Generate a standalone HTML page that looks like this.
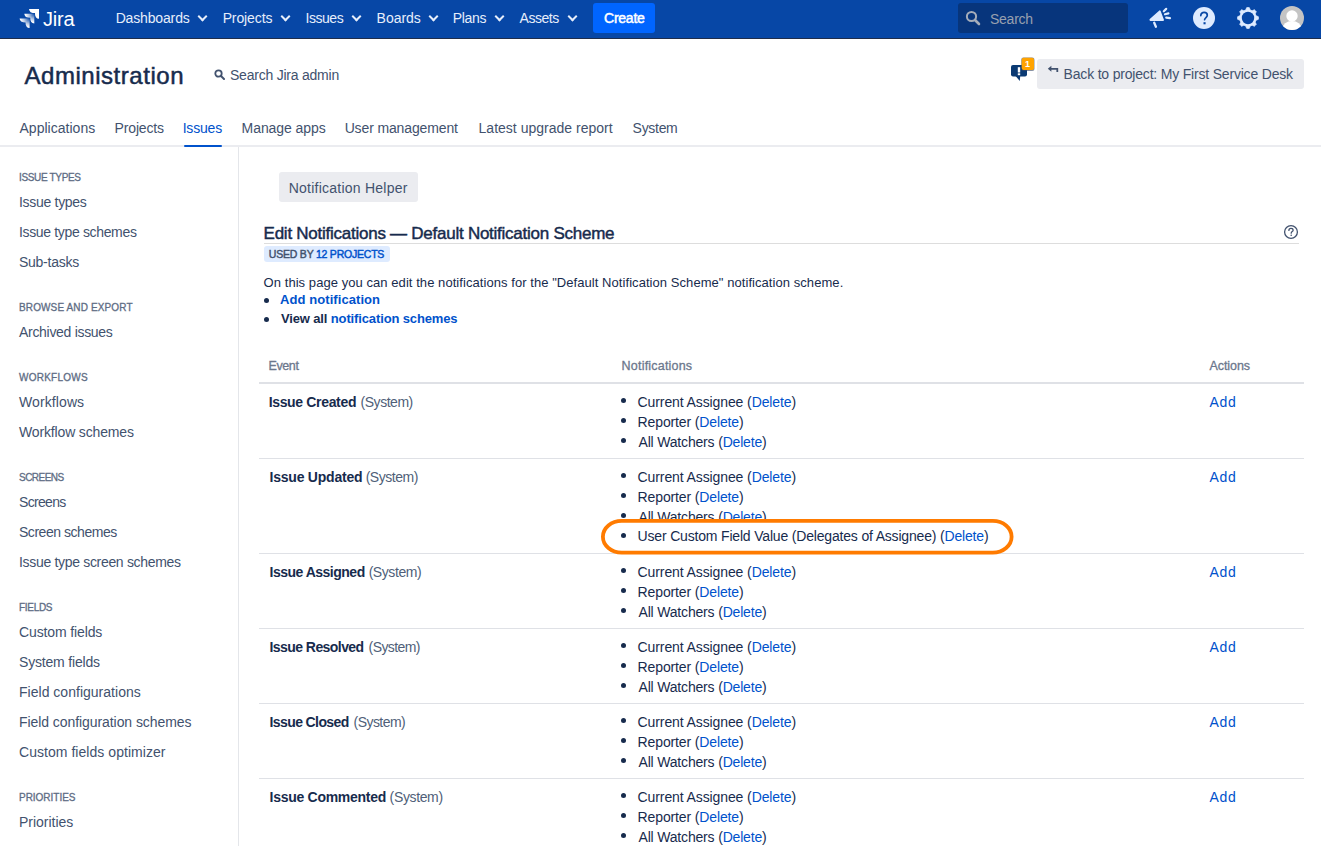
<!DOCTYPE html><html><head><meta charset="utf-8"><style>
*{box-sizing:border-box;margin:0;padding:0}
html,body{width:1321px;height:846px;overflow:hidden;background:#fff;font-family:"Liberation Sans",sans-serif;color:#172B4D;font-size:14px}
.t{position:absolute;white-space:nowrap;line-height:20px}
.r14{font-size:14px;letter-spacing:-0.2px}
.b14{font-size:14px;font-weight:bold;letter-spacing:-0.4px}
#hdr{position:absolute;left:0;top:0;width:1321px;height:39px;background:#0747A6;border-bottom:1px solid #1f2d4a}
.nav{color:#E6EEFB;font-size:14px;letter-spacing:-0.3px;top:8px}
.chev{position:absolute;top:13px;width:7px;height:7px;border-right:2.2px solid #E6EEFB;border-bottom:2.2px solid #E6EEFB;transform:rotate(45deg)}
.sh{font-size:10px;color:#5E6C84;left:19px;letter-spacing:-0.3px;-webkit-text-stroke:0.3px #5E6C84}
.si{font-size:14px;color:#42526E;left:19px;letter-spacing:-0.25px}
.tab{font-size:14px;color:#42526E;top:118px;letter-spacing:-0.1px}
.lk{color:#0052CC}
.sys{color:#505F79}
.rb{position:absolute;left:259px;width:1045px;height:1px;background:#DFE1E6}
.bul{position:absolute;width:5px;height:5px;border-radius:50%;background:#172B4D}
</style></head><body>
<div id="hdr">
<svg style="position:absolute;left:19px;top:8px" width="22" height="22" viewBox="0 0 22 22">
<defs>
<radialGradient id="g1" cx="0.95" cy="0.05" r="1.0"><stop offset="0" stop-color="#fff" stop-opacity="0.1"/><stop offset="0.5" stop-color="#fff" stop-opacity="0.7"/><stop offset="0.85" stop-color="#fff" stop-opacity="1"/></radialGradient>
</defs>
<polygon points="10.00,1.10 20.00,1.10 20.00,10.80 18.20,10.40 16.90,9.20 16.10,7.20 16.00,5.10 13.60,4.90 11.60,4.20 10.40,2.60" fill="#fff"/>
<polygon points="5.30,5.80 15.30,5.80 15.30,15.50 13.50,15.10 12.20,13.90 11.40,11.90 11.30,9.80 8.90,9.60 6.90,8.90 5.70,7.30" fill="url(#g1)"/>
<polygon points="0.60,10.40 10.60,10.40 10.60,20.10 8.80,19.70 7.50,18.50 6.70,16.50 6.60,14.40 4.20,14.20 2.20,13.50 1.00,11.90" fill="url(#g1)"/>
</svg>
<div class="t" style="left:43px;top:7px;font-size:20px;line-height:24px;color:#fff;letter-spacing:-0.2px">Jira</div>
<div id="nav_Dashboards" class="t" style="left:115.63px;top:8px;color:#E6EEFB;font-size:14px;letter-spacing:-0.150px">Dashboards</div>
<div class="chev" style="left:199px"></div>
<div id="nav_Projects" class="t" style="left:222.65px;top:8px;color:#E6EEFB;font-size:14px;letter-spacing:-0.107px">Projects</div>
<div class="chev" style="left:282px"></div>
<div id="nav_Issues" class="t" style="left:305.60px;top:8px;color:#E6EEFB;font-size:14px;letter-spacing:-0.480px">Issues</div>
<div class="chev" style="left:353px"></div>
<div id="nav_Boards" class="t" style="left:376.60px;top:8px;color:#E6EEFB;font-size:14px;letter-spacing:-0.030px">Boards</div>
<div class="chev" style="left:430px"></div>
<div id="nav_Plans" class="t" style="left:452.65px;top:8px;color:#E6EEFB;font-size:14px;letter-spacing:-0.300px">Plans</div>
<div class="chev" style="left:496px"></div>
<div id="nav_Assets" class="t" style="left:519.55px;top:8px;color:#E6EEFB;font-size:14px;letter-spacing:-0.480px">Assets</div>
<div class="chev" style="left:569px"></div>
<div class="t" style="left:593px;top:3px;width:62px;height:30px;background:#0065FF;border-radius:3px"></div>
<div id="create" class="t" style="left:604.00px;top:8px;color:#fff;font-size:14px;-webkit-text-stroke:0.5px #fff;letter-spacing:-0.232px">Create</div>
<div class="t" style="left:958px;top:3px;width:170px;height:30px;background:#07357C;border-radius:3px"></div>
<svg style="position:absolute;left:965px;top:10px" width="16" height="16" viewBox="0 0 16 16"><circle cx="6.5" cy="6.5" r="4.6" fill="none" stroke="#A5ADBA" stroke-width="2"/><line x1="10" y1="10" x2="14" y2="14" stroke="#A5ADBA" stroke-width="2.6" stroke-linecap="round"/></svg>
<div class="t" style="left:990px;top:9px;color:#97A0AF;font-size:14px;letter-spacing:-0.25px">Search</div>
<svg style="position:absolute;left:1148px;top:6px" width="26" height="24" viewBox="0 0 26 24">
<path d="M2.3 13.6 L11.9 5.2 L15.2 14.1 L2.3 14.1 Z" fill="#DEEBFF" stroke="#DEEBFF" stroke-width="1.6" stroke-linejoin="round"/>
<line x1="6.2" y1="16.8" x2="7.9" y2="20.8" stroke="#DEEBFF" stroke-width="2.3" stroke-linecap="round"/>
<line x1="15.8" y1="5.3" x2="18.2" y2="2.9" stroke="#DEEBFF" stroke-width="2.2" stroke-linecap="round"/>
<line x1="17" y1="8.2" x2="20.4" y2="7.4" stroke="#DEEBFF" stroke-width="2.2" stroke-linecap="round"/>
<line x1="18.2" y1="11.6" x2="22" y2="12.1" stroke="#DEEBFF" stroke-width="2.2" stroke-linecap="round"/>
</svg>
<svg style="position:absolute;left:1193px;top:7px" width="22" height="22" viewBox="0 0 22 22">
<circle cx="11" cy="11" r="11" fill="#DEEBFF"/>
<path d="M7.8 8.6 C7.8 6.6 9.3 5.4 11.1 5.4 C13 5.4 14.3 6.6 14.3 8.3 C14.3 10.4 11.7 10.6 11.6 12.7" fill="none" stroke="#0747A6" stroke-width="1.7" stroke-linecap="round"/>
<rect x="10.5" y="15.2" width="2.1" height="2.1" fill="#0747A6"/>
</svg>
<svg style="position:absolute;left:1237px;top:7px" width="22" height="22" viewBox="0 0 22 22">
<polygon points="9.64,0.69 11.00,0.60 12.36,0.69 13.15,2.98 14.18,3.33 15.15,3.81 17.33,2.75 18.35,3.65 19.25,4.67 18.19,6.85 18.67,7.82 19.02,8.85 21.31,9.64 21.40,11.00 21.31,12.36 19.02,13.15 18.67,14.18 18.19,15.15 19.25,17.33 18.35,18.35 17.33,19.25 15.15,18.19 14.18,18.67 13.15,19.02 12.36,21.31 11.00,21.40 9.64,21.31 8.85,19.02 7.82,18.67 6.85,18.19 4.67,19.25 3.65,18.35 2.75,17.33 3.81,15.15 3.33,14.18 2.98,13.15 0.69,12.36 0.60,11.00 0.69,9.64 2.98,8.85 3.33,7.82 3.81,6.85 2.75,4.67 3.65,3.65 4.67,2.75 6.85,3.81 7.82,3.33 8.85,2.98" fill="#DEEBFF" stroke="#DEEBFF" stroke-width="0.8" stroke-linejoin="round"/>
<circle cx="11" cy="11" r="6.2" fill="#0747A6"/>
</svg>
<svg style="position:absolute;left:1280px;top:6px" width="24" height="24" viewBox="0 0 24 24">
<defs><clipPath id="cav"><circle cx="12" cy="12" r="12"/></clipPath></defs>
<circle cx="12" cy="12" r="12" fill="#C4C4C4"/>
<g clip-path="url(#cav)"><circle cx="12" cy="10" r="5.7" fill="#fff"/><ellipse cx="12" cy="23" rx="9.6" ry="8" fill="#fff"/></g>
</svg>
</div>
<div id="admin" class="t" style="left:24.49px;top:60px;font-size:24px;line-height:32px;color:#172B4D;-webkit-text-stroke:0.5px #172B4D;letter-spacing:0.538px">Administration</div>
<svg style="position:absolute;left:214px;top:69px" width="11" height="11" viewBox="0 0 11 11"><circle cx="4.5" cy="4.5" r="3.2" fill="none" stroke="#42526E" stroke-width="1.8"/><line x1="7" y1="7" x2="10" y2="10" stroke="#42526E" stroke-width="2" stroke-linecap="round"/></svg>
<div id="sadmin" class="t" style="left:230.00px;top:65px;font-size:14px;color:#42526E;letter-spacing:-0.228px">Search Jira admin</div>
<svg style="position:absolute;left:1009px;top:57px" width="27" height="26" viewBox="0 0 27 26">
<rect x="2" y="8" width="16" height="11.6" rx="2" fill="#0B3A73"/><path d="M6.5 19 L10.8 23.9 L11.2 19 Z" fill="#0B3A73"/>
<rect x="8.8" y="10.2" width="2.4" height="5.3" fill="#fff"/><rect x="8.8" y="16.3" width="2.4" height="1.9" fill="#fff"/>
<rect x="12.2" y="0.6" width="13.3" height="13.3" rx="2.2" fill="#3b4a66" opacity="0.6"/>
<rect x="12.7" y="0.8" width="12.3" height="12.3" rx="2" fill="#FFA300"/>
</svg>
<div class="t" style="left:1021px;top:57px;width:13px;text-align:center;font-size:9px;line-height:14px;font-weight:bold;color:#fff">1</div>
<div class="t" style="left:1037px;top:59px;width:267px;height:30px;background:#EBECF0;border-radius:3px"></div>
<svg style="position:absolute;left:1047px;top:65px" width="12" height="9" viewBox="0 0 12 9"><path d="M3 3.8 H10.3 V6.9" fill="none" stroke="#42526E" stroke-width="1.8"/><path d="M0.8 3.8 L4.4 0.8 V6.8 Z" fill="#42526E"/></svg>
<div id="back" class="t" style="left:1063.59px;top:64px;font-size:14px;color:#42526E;letter-spacing:-0.190px">Back to project: My First Service Desk</div>
<div id="tab_Applications" class="t" style="left:19.50px;top:118px;font-size:14px;color:#42526E;letter-spacing:0.023px">Applications</div>
<div id="tab_Projects" class="t" style="left:114.60px;top:118px;font-size:14px;color:#42526E;letter-spacing:-0.164px">Projects</div>
<div id="tab_Issues" class="t" style="left:182.65px;top:118px;font-size:14px;color:#0052CC;letter-spacing:-0.190px">Issues</div>
<div id="tab_Manage_apps" class="t" style="left:241.59px;top:118px;font-size:14px;color:#42526E;letter-spacing:-0.064px">Manage apps</div>
<div id="tab_User_management" class="t" style="left:344.64px;top:118px;font-size:14px;color:#42526E;letter-spacing:-0.132px">User management</div>
<div id="tab_Latest_upgrade_report" class="t" style="left:478.59px;top:118px;font-size:14px;color:#42526E;letter-spacing:0.008px">Latest upgrade report</div>
<div id="tab_System" class="t" style="left:632.60px;top:118px;font-size:14px;color:#42526E;letter-spacing:-0.298px">System</div>
<div style="position:absolute;left:0;top:145px;width:1321px;height:2px;background:#EBECF0"></div>
<div style="position:absolute;left:184px;top:145px;width:38px;height:2px;border-radius:1px;background:#0052CC"></div>
<div style="position:absolute;left:238px;top:147px;width:1px;height:699px;background:#E4E6EA"></div>
<div class="t sh" style="top:168px;letter-spacing:-0.340px">ISSUE TYPES</div>
<div class="t si" style="top:192px;letter-spacing:-0.300px">Issue types</div>
<div class="t si" style="top:222px;letter-spacing:-0.344px">Issue type schemes</div>
<div class="t si" style="top:252px;letter-spacing:-0.262px">Sub-tasks</div>
<div class="t sh" style="top:298px;letter-spacing:0.125px">BROWSE AND EXPORT</div>
<div class="t si" style="top:322px;letter-spacing:-0.300px">Archived issues</div>
<div class="t sh" style="top:368px;letter-spacing:0.250px">WORKFLOWS</div>
<div class="t si" style="top:392px;letter-spacing:0.100px">Workflows</div>
<div class="t si" style="top:422px;letter-spacing:-0.150px">Workflow schemes</div>
<div class="t sh" style="top:468px;letter-spacing:-0.517px">SCREENS</div>
<div class="t si" style="top:492px;letter-spacing:-0.667px">Screens</div>
<div class="t si" style="top:522px;letter-spacing:-0.465px">Screen schemes</div>
<div class="t si" style="top:552px;letter-spacing:-0.317px">Issue type screen schemes</div>
<div class="t sh" style="top:598px;letter-spacing:-0.300px">FIELDS</div>
<div class="t si" style="top:622px;letter-spacing:-0.125px">Custom fields</div>
<div class="t si" style="top:652px;letter-spacing:-0.183px">System fields</div>
<div class="t si" style="top:682px;letter-spacing:0.018px">Field configurations</div>
<div class="t si" style="top:712px;letter-spacing:-0.069px">Field configuration schemes</div>
<div class="t si" style="top:742px;letter-spacing:0.045px">Custom fields optimizer</div>
<div class="t sh" style="top:788px;letter-spacing:-0.022px">PRIORITIES</div>
<div class="t si" style="top:812px;letter-spacing:-0.017px">Priorities</div>
<div class="t" style="left:279px;top:172px;width:139px;height:30px;background:#EBECF0;border-radius:3px"></div>
<div id="nhelp" class="t" style="left:288.67px;top:178px;color:#42526E;font-size:14px;letter-spacing:0.240px">Notification Helper</div>
<div id="title" class="t" style="left:263.58px;top:223px;font-size:17px;line-height:22px;color:#172B4D;-webkit-text-stroke:0.45px #172B4D;letter-spacing:-0.253px">Edit Notifications — Default Notification Scheme</div>
<div style="position:absolute;left:264px;top:243px;width:1035px;height:1px;background:#DDDDDD"></div>
<svg style="position:absolute;left:1283px;top:224px" width="16" height="16" viewBox="0 0 16 16"><circle cx="8" cy="8" r="6.4" fill="none" stroke="#42526E" stroke-width="1.3"/>
<path d="M5.9 6.4 C5.9 5.1 6.9 4.4 8 4.4 C9.2 4.4 10.1 5.1 10.1 6.2 C10.1 7.6 8.2 7.6 8.2 9.2" fill="none" stroke="#42526E" stroke-width="1.3" stroke-linecap="round"/><circle cx="8.2" cy="11.3" r="0.8" fill="#42526E"/></svg>
<div class="t" style="left:264px;top:246px;width:126px;height:16px;background:#DEEBFF;border-radius:3px"></div>
<div id="badge" class="t" style="left:268.86px;top:247px;font-size:10.5px;line-height:14px;color:#42526E;-webkit-text-stroke:0.45px #42526E;letter-spacing:-0.220px">USED BY <span style="color:#0052CC;-webkit-text-stroke:0.45px #0052CC">12 PROJECTS</span></div>
<div id="para" class="t" style="left:263.58px;top:274px;font-size:13px;line-height:18px;color:#172B4D;letter-spacing:0.060px">On this page you can edit the notifications for the "Default Notification Scheme" notification scheme.</div>
<div class="bul" style="left:264px;top:298px"></div>
<div id="addn" class="t" style="left:280.06px;top:291px;font-size:13px;line-height:18px;font-weight:bold;letter-spacing:0.072px"><span class="lk">Add notification</span></div>
<div class="bul" style="left:264px;top:317px"></div>
<div id="viewall" class="t" style="left:280.96px;top:310px;font-size:13px;line-height:18px;font-weight:bold;letter-spacing:-0.135px">View all <span class="lk">notification schemes</span></div>
<div id="h_event" class="t" style="left:268.55px;top:357px;font-size:12.5px;line-height:18px;color:#6B778C;-webkit-text-stroke:0.3px #6B778C;letter-spacing:-0.410px">Event</div>
<div id="h_notif" class="t" style="left:621.59px;top:357px;font-size:12.5px;line-height:18px;color:#6B778C;-webkit-text-stroke:0.3px #6B778C;letter-spacing:0.205px">Notifications</div>
<div id="h_act" class="t" style="left:1209.53px;top:357px;font-size:12.5px;line-height:18px;color:#6B778C;-webkit-text-stroke:0.3px #6B778C;letter-spacing:-0.080px">Actions</div>
<div class="rb" style="top:382px;height:2px"></div>
<div class="rb" style="top:458px"></div>
<div class="rb" style="top:553px"></div>
<div class="rb" style="top:628px"></div>
<div class="rb" style="top:703px"></div>
<div class="rb" style="top:778px"></div>
<div id="rn0" class="t" style="left:268.63px;top:392px;font-size:14px;font-weight:bold;color:#172B4D;letter-spacing:-0.333px">Issue Created</div>
<div id="rs0" class="t" style="left:360.55px;top:392px;font-size:14px;letter-spacing:-0.470px"><span class="sys">(System)</span></div>
<div id="ra0" class="t" style="left:1209.51px;top:392px;font-size:14px;color:#0052CC;letter-spacing:0.700px">Add</div>
<div class="bul" style="left:621px;top:398px"></div>
<div id="ri0_0" class="t" style="left:637.60px;top:392px;font-size:14px;letter-spacing:-0.106px">Current Assignee (<span class="lk">Delete</span>)</div>
<div class="bul" style="left:621px;top:418px"></div>
<div id="ri0_1" class="t" style="left:637.60px;top:412px;font-size:14px;letter-spacing:-0.133px">Reporter (<span class="lk">Delete</span>)</div>
<div class="bul" style="left:621px;top:438px"></div>
<div id="ri0_2" class="t" style="left:638.50px;top:432px;font-size:14px;letter-spacing:-0.178px">All Watchers (<span class="lk">Delete</span>)</div>
<div id="rn1" class="t" style="left:269.55px;top:467px;font-size:14px;font-weight:bold;color:#172B4D;letter-spacing:-0.228px">Issue Updated</div>
<div id="rs1" class="t" style="left:365.63px;top:467px;font-size:14px;letter-spacing:-0.470px"><span class="sys">(System)</span></div>
<div id="ra1" class="t" style="left:1209.51px;top:467px;font-size:14px;color:#0052CC;letter-spacing:0.700px">Add</div>
<div class="bul" style="left:621px;top:473px"></div>
<div id="ri1_0" class="t" style="left:637.60px;top:467px;font-size:14px;letter-spacing:-0.106px">Current Assignee (<span class="lk">Delete</span>)</div>
<div class="bul" style="left:621px;top:493px"></div>
<div id="ri1_1" class="t" style="left:637.60px;top:487px;font-size:14px;letter-spacing:-0.133px">Reporter (<span class="lk">Delete</span>)</div>
<div class="bul" style="left:621px;top:513px"></div>
<div class="t" style="left:638.50px;top:507px;font-size:14px;letter-spacing:-0.178px">All Watchers (<span class="lk">Delete</span>)</div>
<div id="rn2" class="t" style="left:269.55px;top:562px;font-size:14px;font-weight:bold;color:#172B4D;letter-spacing:-0.504px">Issue Assigned</div>
<div id="rs2" class="t" style="left:368.63px;top:562px;font-size:14px;letter-spacing:-0.419px"><span class="sys">(System)</span></div>
<div id="ra2" class="t" style="left:1209.51px;top:562px;font-size:14px;color:#0052CC;letter-spacing:0.700px">Add</div>
<div class="bul" style="left:621px;top:568px"></div>
<div id="ri2_0" class="t" style="left:637.60px;top:562px;font-size:14px;letter-spacing:-0.106px">Current Assignee (<span class="lk">Delete</span>)</div>
<div class="bul" style="left:621px;top:588px"></div>
<div id="ri2_1" class="t" style="left:637.60px;top:582px;font-size:14px;letter-spacing:-0.133px">Reporter (<span class="lk">Delete</span>)</div>
<div class="bul" style="left:621px;top:608px"></div>
<div id="ri2_2" class="t" style="left:638.50px;top:602px;font-size:14px;letter-spacing:-0.178px">All Watchers (<span class="lk">Delete</span>)</div>
<div id="rn3" class="t" style="left:269.55px;top:637px;font-size:14px;font-weight:bold;color:#172B4D;letter-spacing:-0.566px">Issue Resolved</div>
<div id="rs3" class="t" style="left:368.55px;top:637px;font-size:14px;letter-spacing:-0.573px"><span class="sys">(System)</span></div>
<div id="ra3" class="t" style="left:1209.51px;top:637px;font-size:14px;color:#0052CC;letter-spacing:0.700px">Add</div>
<div class="bul" style="left:621px;top:643px"></div>
<div id="ri3_0" class="t" style="left:637.60px;top:637px;font-size:14px;letter-spacing:-0.106px">Current Assignee (<span class="lk">Delete</span>)</div>
<div class="bul" style="left:621px;top:663px"></div>
<div id="ri3_1" class="t" style="left:637.60px;top:657px;font-size:14px;letter-spacing:-0.133px">Reporter (<span class="lk">Delete</span>)</div>
<div class="bul" style="left:621px;top:683px"></div>
<div id="ri3_2" class="t" style="left:638.50px;top:677px;font-size:14px;letter-spacing:-0.178px">All Watchers (<span class="lk">Delete</span>)</div>
<div id="rn4" class="t" style="left:269.55px;top:712px;font-size:14px;font-weight:bold;color:#172B4D;letter-spacing:-0.605px">Issue Closed</div>
<div id="rs4" class="t" style="left:353.56px;top:712px;font-size:14px;letter-spacing:-0.547px"><span class="sys">(System)</span></div>
<div id="ra4" class="t" style="left:1209.51px;top:712px;font-size:14px;color:#0052CC;letter-spacing:0.700px">Add</div>
<div class="bul" style="left:621px;top:718px"></div>
<div id="ri4_0" class="t" style="left:637.60px;top:712px;font-size:14px;letter-spacing:-0.106px">Current Assignee (<span class="lk">Delete</span>)</div>
<div class="bul" style="left:621px;top:738px"></div>
<div id="ri4_1" class="t" style="left:637.60px;top:732px;font-size:14px;letter-spacing:-0.133px">Reporter (<span class="lk">Delete</span>)</div>
<div class="bul" style="left:621px;top:758px"></div>
<div id="ri4_2" class="t" style="left:638.50px;top:752px;font-size:14px;letter-spacing:-0.178px">All Watchers (<span class="lk">Delete</span>)</div>
<div id="rn5" class="t" style="left:269.55px;top:787px;font-size:14px;font-weight:bold;color:#172B4D;letter-spacing:-0.278px">Issue Commented</div>
<div id="rs5" class="t" style="left:389.62px;top:787px;font-size:14px;letter-spacing:-0.367px"><span class="sys">(System)</span></div>
<div id="ra5" class="t" style="left:1209.51px;top:787px;font-size:14px;color:#0052CC;letter-spacing:0.700px">Add</div>
<div class="bul" style="left:621px;top:793px"></div>
<div id="ri5_0" class="t" style="left:637.60px;top:787px;font-size:14px;letter-spacing:-0.106px">Current Assignee (<span class="lk">Delete</span>)</div>
<div class="bul" style="left:621px;top:813px"></div>
<div id="ri5_1" class="t" style="left:637.60px;top:807px;font-size:14px;letter-spacing:-0.133px">Reporter (<span class="lk">Delete</span>)</div>
<div class="bul" style="left:621px;top:833px"></div>
<div id="ri5_2" class="t" style="left:638.50px;top:827px;font-size:14px;letter-spacing:-0.178px">All Watchers (<span class="lk">Delete</span>)</div>
<svg style="position:absolute;left:596px;top:514px" width="424" height="46" viewBox="596 514 424 46"><rect x="602.9" y="520.9" width="408.7" height="31.8" rx="18.8" ry="15.9" fill="#fff" stroke="#FF7B00" stroke-width="3.8"/></svg>
<div class="bul" style="left:621px;top:533px"></div>
<div id="ucf" class="t" style="left:637.60px;top:526px;font-size:14px;letter-spacing:-0.179px">User Custom Field Value (Delegates of Assignee) (<span class="lk">Delete</span>)</div>
</body></html>
